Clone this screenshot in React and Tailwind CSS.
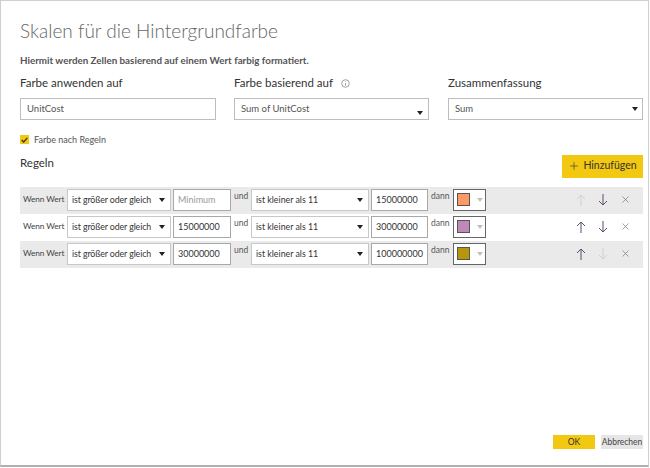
import { Plus, X } from 'lucide-react';

const font = { fontFamily: 'Lato, "Open Sans", sans-serif' };

const Caret = ({ className = '' }) => (
    <svg width="6" height="4" viewBox="0 0 6 4" className={className}>
        <path d="M0 0 L6 0 L3 4 Z" fill="#222" />
    </svg>
);

const Arrow = ({ dir, active }) => (
    <svg width="10" height="12" viewBox="0 0 10 12" fill="none" stroke={active ? '#5e4b6e' : '#d0d0d0'} strokeWidth="1">
        {dir === 'up' ? (
            <>
                <path d="M5 1 L5 12" />
                <path d="M1 5 L5 1 L9 5" />
            </>
        ) : (
            <>
                <path d="M5 0 L5 11" />
                <path d="M1 7 L5 11 L9 7" />
            </>
        )}
    </svg>
);

const rules = [
    { min: 'Minimum', max: '15000000', color: '#ff9966', up: false, down: true, bg: 'bg-[#eaeaea]', placeholder: true },
    { min: '15000000', max: '30000000', color: '#c088b8', up: true, down: true, bg: 'bg-white' },
    { min: '30000000', max: '100000000', color: '#b8960c', up: true, down: false, bg: 'bg-[#eaeaea]' },
];

const RuleRow = ({ rule }) => (
    <div className={`flex items-start h-[27px] pt-[2px] ${rule.bg}`}>
        <span className="w-[47px] shrink-0 pl-[3px] pt-[4px] text-[8.3px] tracking-[-0.1px] text-[#444] whitespace-nowrap">Wenn Wert</span>
        <div className="w-[104px] shrink-0 h-[22px] bg-white border border-[#c8c8c8] flex items-center justify-between pl-[4px] pr-[5px]">
            <span className="text-[8.8px] tracking-[-0.1px] text-[#333] whitespace-nowrap">ist größer oder gleich</span>
            <Caret />
        </div>
        <div className="ml-[2px] w-[58px] shrink-0 h-[22px] bg-white border border-[#a8a8a8] flex items-center pl-[4px]">
            <span className={`text-[9px] ${rule.placeholder ? 'text-[#999]' : 'text-[#333]'}`}>{rule.min}</span>
        </div>
        <span className="w-[20px] shrink-0 pl-[3px] pt-[1px] text-[8.5px] text-[#555]">und</span>
        <div className="w-[118px] shrink-0 h-[22px] bg-white border border-[#c8c8c8] flex items-center justify-between pl-[4px] pr-[5px]">
            <span className="text-[8.8px] text-[#333] whitespace-nowrap">ist kleiner als 11</span>
            <Caret />
        </div>
        <div className="ml-[2px] w-[57px] shrink-0 h-[22px] bg-white border border-[#a8a8a8] flex items-center pl-[4px]">
            <span className="text-[9px] text-[#333]">{rule.max}</span>
        </div>
        <span className="w-[25px] shrink-0 pl-[3px] pt-[1px] text-[8.5px] text-[#555]">dann</span>
        <div className="w-[33px] shrink-0 h-[22px] bg-white border border-[#666] flex items-center pl-[3px] gap-[7px]">
            <div className="w-[13px] h-[13px] border border-[#555]" style={{ backgroundColor: rule.color }} />
            <svg width="6" height="4" viewBox="0 0 6 4">
                <path d="M0 0 L6 0 L3 4 Z" fill="#c0c0c0" />
            </svg>
        </div>
        <div className="ml-auto flex items-center gap-[12px] pr-[12px] pt-[5px]">
            <Arrow dir="up" active={rule.up} />
            <Arrow dir="down" active={rule.down} />
            <X size={11} strokeWidth={1.3} color="#666" />
        </div>
    </div>
);

const App = () => {
    return (
        <div className="w-[650px] h-[468px] bg-white" style={font}>
            <div className="w-[649px] h-[467px] border-l border-t border-r border-[#cfcfcf] border-b-2 border-b-[#b0b0b0] flex flex-col pl-[19px] pr-[5px]">
                <h1 className="mt-[17px] text-[19px] leading-[25px] font-light text-[#666]">
                    Skalen für die Hintergrundfarbe
                </h1>
                <p className="mt-[10px] text-[9.8px] leading-[14px] font-bold text-[#555]">
                    Hiermit werden Zellen basierend auf einem Wert farbig formatiert.
                </p>
                <div className="mt-[7px] grid grid-cols-[214px_214px_195px]">
                    <div>
                        <div className="text-[11.5px] leading-[18px] text-[#333]">Farbe anwenden auf</div>
                        <div className="mt-[6px] w-[196px] h-[22px] border border-[#bdbdbd] flex items-center pl-[6px]">
                            <span className="text-[9.5px] text-[#555]">UnitCost</span>
                        </div>
                    </div>
                    <div>
                        <div className="text-[11.5px] leading-[18px] text-[#333] flex items-center gap-[8px]">
                            Farbe basierend auf
                            <svg width="9" height="9" viewBox="0 0 9 9" fill="none" stroke="#888" strokeWidth="0.8">
                                <circle cx="4.5" cy="4.5" r="3.8" />
                                <path d="M4.5 4 L4.5 6.6" />
                                <path d="M4.5 2.4 L4.5 3" />
                            </svg>
                        </div>
                        <div className="mt-[6px] w-[195px] h-[22px] border border-[#bdbdbd] flex items-center justify-between pl-[6px] pr-[5px]">
                            <span className="text-[9.5px] text-[#555]">Sum of UnitCost</span>
                            <Caret className="mt-[8px]" />
                        </div>
                    </div>
                    <div>
                        <div className="text-[11.5px] leading-[18px] text-[#333]">Zusammenfassung</div>
                        <div className="mt-[6px] w-[195px] h-[22px] border border-[#bdbdbd] flex items-center justify-between pl-[6px] pr-[4px]">
                            <span className="text-[9.5px] text-[#555]">Sum</span>
                            <Caret />
                        </div>
                    </div>
                </div>
                <div className="mt-[13px] flex items-center gap-[5px]">
                    <div className="w-[9px] h-[9px] bg-[#f2c811] flex items-center justify-center">
                        <svg width="7" height="6" viewBox="0 0 7 6" fill="none" stroke="#333" strokeWidth="1.3">
                            <path d="M0.7 3 L2.7 5 L6.3 0.8" />
                        </svg>
                    </div>
                    <span className="text-[9px] text-[#555]">Farbe nach Regeln</span>
                </div>
                <div className="mt-[7px] flex items-end justify-between">
                    <span className="mb-[6px] text-[11.5px] leading-[18px] text-[#333]">Regeln</span>
                    <button className="w-[81px] h-[23px] bg-[#f2c811] flex items-center justify-center gap-[3px] text-[10.5px] text-[#333]">
                        <Plus size={12} strokeWidth={1.2} color="#333" />
                        Hinzufügen
                    </button>
                </div>
                <div className="mt-[9px] flex flex-col">
                    {rules.map((rule, i) => (
                        <RuleRow key={i} rule={rule} />
                    ))}
                </div>
                <div className="mt-auto mb-[16px] flex justify-end gap-[6px]">
                    <button className="w-[42px] h-[14px] bg-[#f2c811] text-[8.5px] leading-[14px] text-[#333]">OK</button>
                    <button className="w-[42px] h-[14px] bg-[#e6e6e6] text-[8.5px] leading-[14px] text-[#444]">Abbrechen</button>
                </div>
            </div>
        </div>
    );
};

export default App;
